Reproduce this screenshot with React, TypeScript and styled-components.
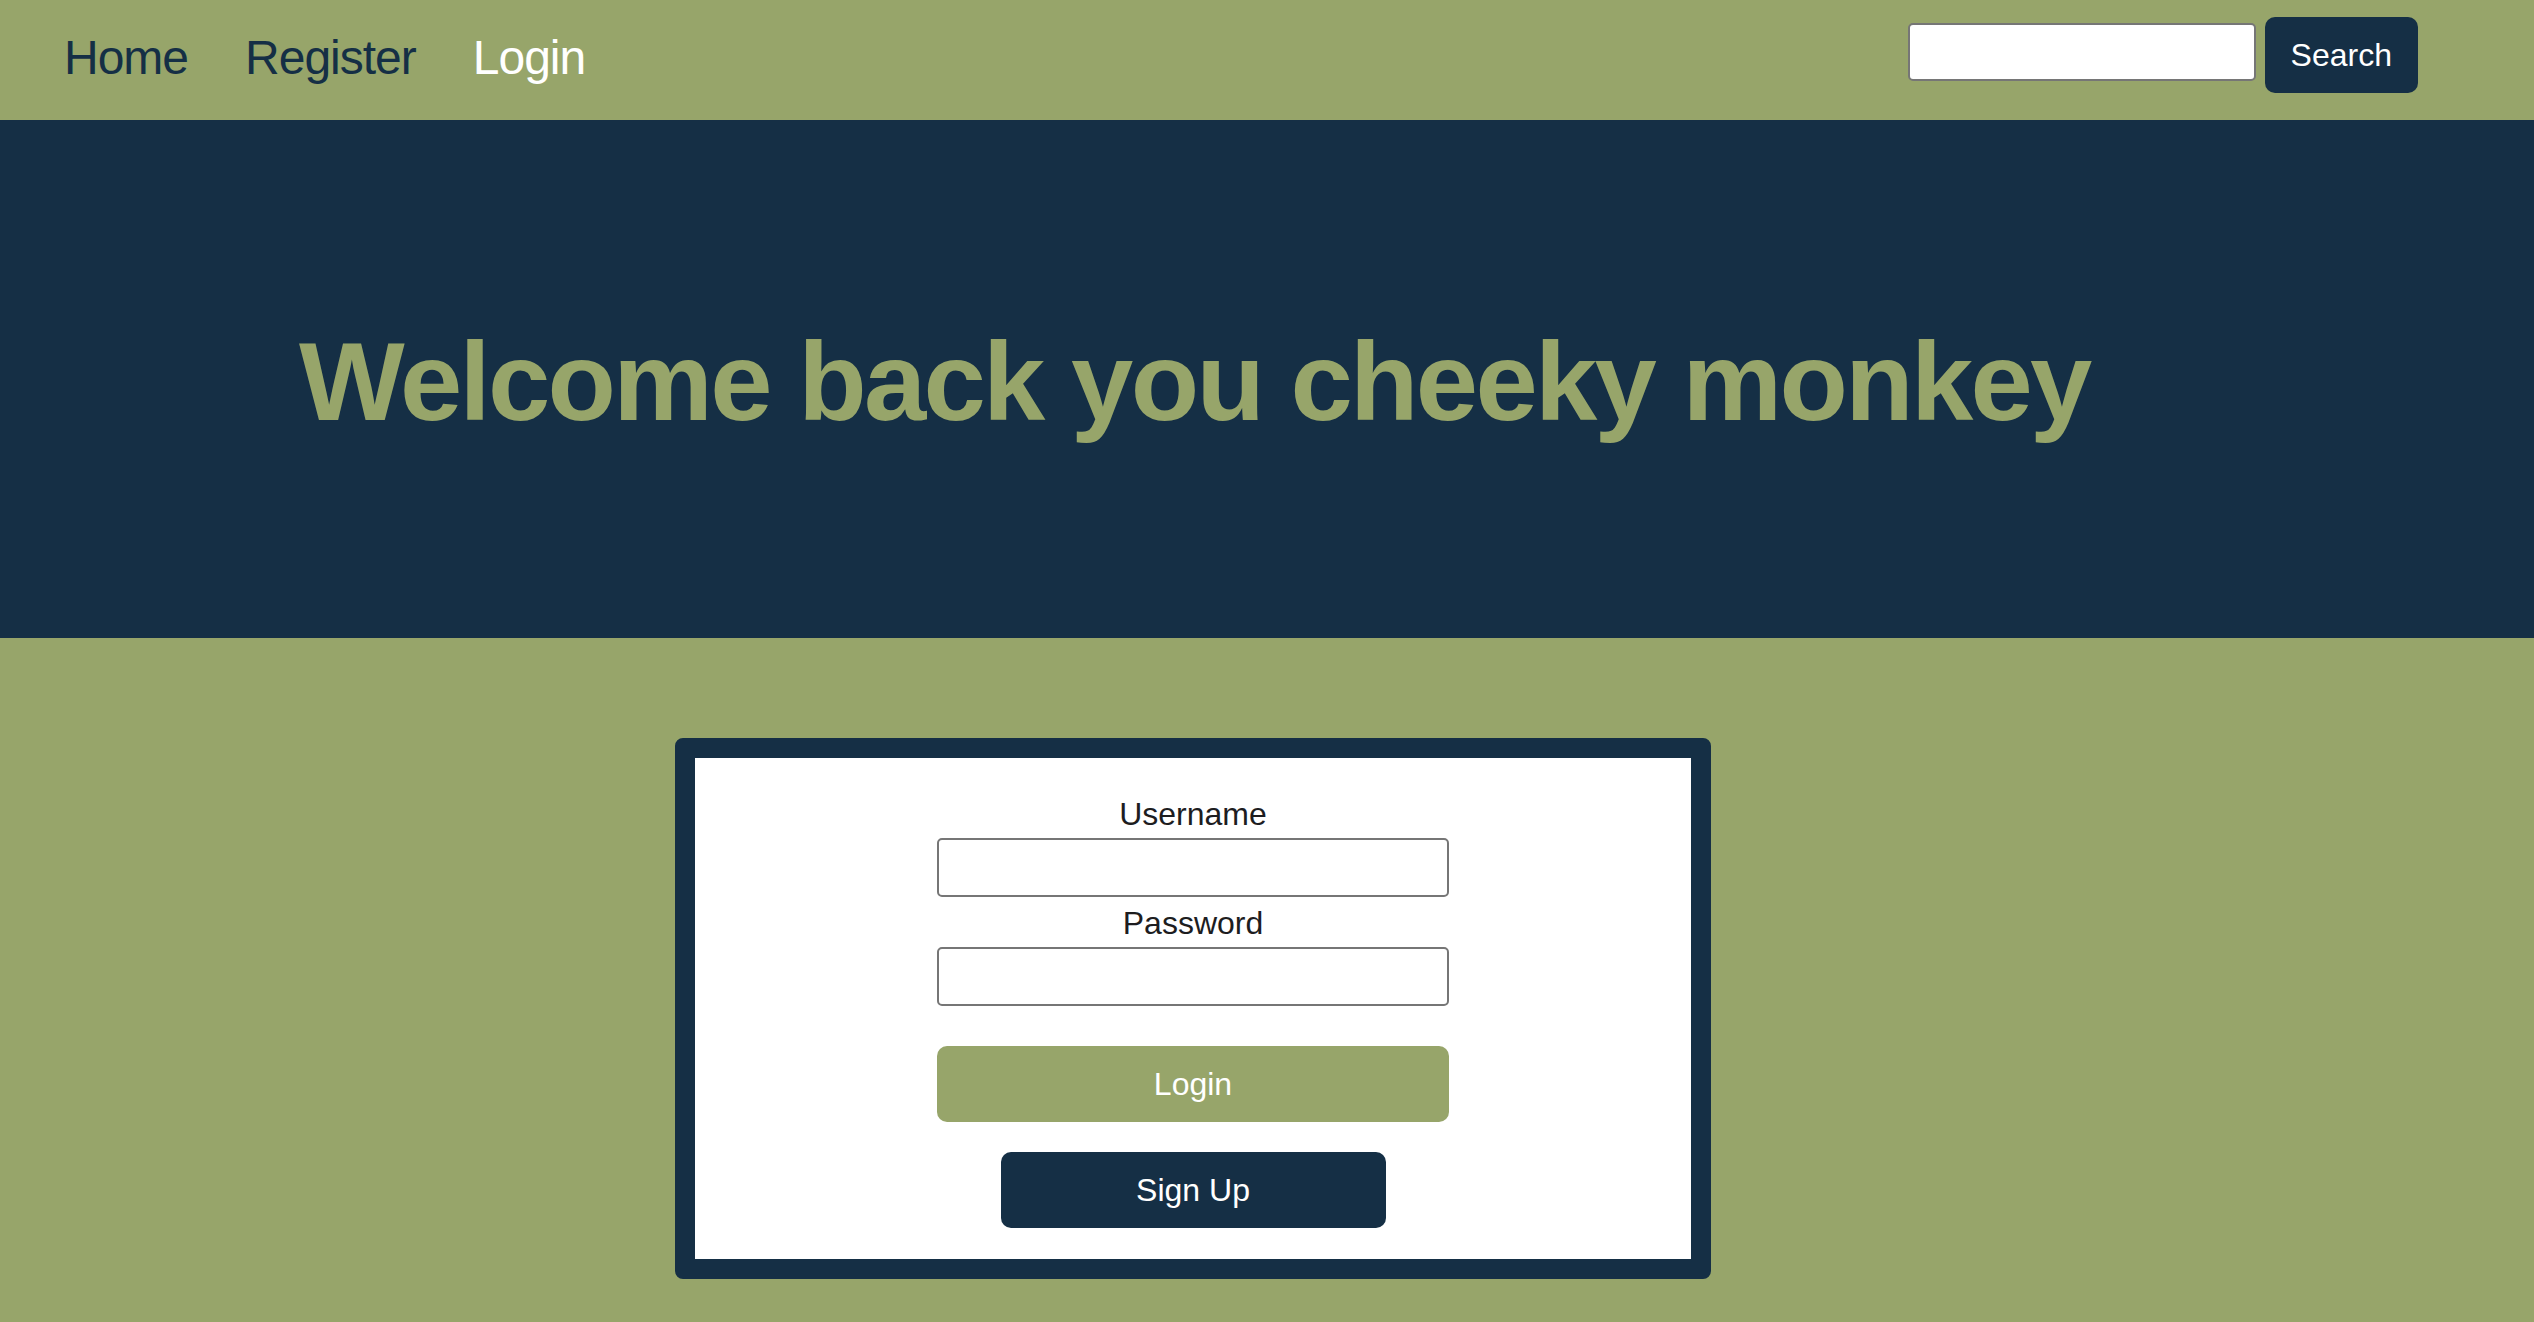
import React from 'react';
import styled, { createGlobalStyle } from 'styled-components';

const navy = '#152f45';
const green = '#97a56a';

const GlobalStyle = createGlobalStyle`
  html, body {
    margin: 0;
    padding: 0;
    background: ${green};
    font-family: 'Liberation Sans', Arial, sans-serif;
  }
  * {
    box-sizing: border-box;
  }
`;

const NavBar = styled.nav`
  display: flex;
  align-items: center;
  justify-content: space-between;
  height: 120px;
  padding: 0 116px 4px 64px;
  background: ${green};
`;

const NavLinks = styled.div`
  display: flex;
  column-gap: 57px;
`;

const NavLink = styled.a<{ active?: boolean }>`
  font-size: 48px;
  line-height: 72px;
  letter-spacing: -1px;
  color: ${(props) => (props.active ? '#ffffff' : navy)};
  text-decoration: none;
  cursor: pointer;
`;

const SearchForm = styled.form`
  display: flex;
  align-items: center;
  column-gap: 9px;
  margin-bottom: 6px;
`;

const SearchInput = styled.input`
  width: 348px;
  height: 58px;
  margin-bottom: 7px;
  border: 2px solid #767676;
  border-radius: 5px;
  background: #fff;
  font-size: 28px;
  padding: 0 10px;
`;

const Button = styled.button<{ variant?: 'green' | 'navy'; width?: number }>`
  display: flex;
  align-items: center;
  justify-content: center;
  width: ${(props) => (props.width ? `${props.width}px` : 'auto')};
  height: 76px;
  padding: 0 26px;
  border: none;
  border-radius: 10px;
  background: ${(props) => (props.variant === 'green' ? green : navy)};
  color: #fff;
  font-family: 'Liberation Sans', Arial, sans-serif;
  font-size: 32px;
  cursor: pointer;
`;

const Hero = styled.header`
  display: flex;
  align-items: center;
  height: 518px;
  padding: 6px 0 0 299px;
  background: ${navy};
`;

const Title = styled.h1`
  margin: 0;
  font-size: 112px;
  line-height: 1.2;
  font-weight: 700;
  letter-spacing: -2.7px;
  color: ${green};
`;

const Main = styled.main`
  padding: 100px 0 43px 675px;
  background: ${green};
`;

const Card = styled.div`
  width: 1036px;
  border: 20px solid ${navy};
  border-radius: 8px;
  background: ${navy};
`;

const CardBody = styled.form`
  display: flex;
  flex-direction: column;
  align-items: center;
  padding: 32px 0 31px;
  background: #fff;
`;

const Label = styled.label`
  font-size: 32px;
  line-height: 48px;
  color: #1d1d1f;
`;

const Field = styled.input`
  width: 512px;
  height: 59px;
  margin-bottom: 2px;
  border: 2px solid #767676;
  border-radius: 5px;
  font-size: 28px;
  padding: 0 10px;
`;

const Actions = styled.div`
  display: flex;
  flex-direction: column;
  align-items: center;
  row-gap: 30px;
  margin-top: 38px;
`;

export default function App() {
  return (
    <>
      <GlobalStyle />
      <NavBar>
        <NavLinks>
          <NavLink>Home</NavLink>
          <NavLink>Register</NavLink>
          <NavLink active>Login</NavLink>
        </NavLinks>
        <SearchForm onSubmit={(e) => e.preventDefault()}>
          <SearchInput type="text" />
          <Button type="submit" variant="navy">
            Search
          </Button>
        </SearchForm>
      </NavBar>
      <Hero>
        <Title>Welcome back you cheeky monkey</Title>
      </Hero>
      <Main>
        <Card>
          <CardBody onSubmit={(e) => e.preventDefault()}>
            <Label htmlFor="username">Username</Label>
            <Field id="username" type="text" />
            <Label htmlFor="password">Password</Label>
            <Field id="password" type="password" />
            <Actions>
              <Button type="submit" variant="green" width={512}>
                Login
              </Button>
              <Button type="button" variant="navy" width={385}>
                Sign Up
              </Button>
            </Actions>
          </CardBody>
        </Card>
      </Main>
    </>
  );
}
